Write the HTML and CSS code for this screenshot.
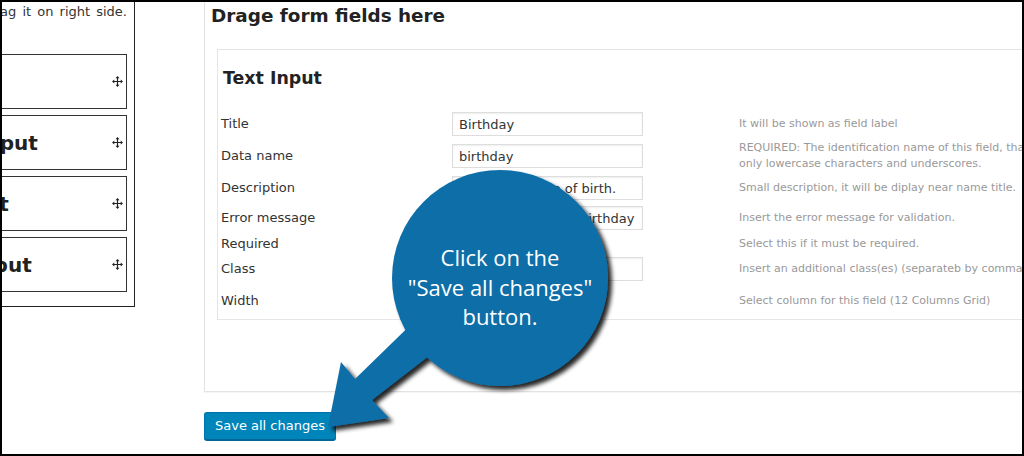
FILE: index.html
```html
<!DOCTYPE html>
<html lang="en">
<head>
<meta charset="utf-8">
<title>Form builder</title>
<link rel="stylesheet" href="styles.css">
</head>
<body>
<div class="frame">
  <aside class="palette">
    <p class="hint"><span>Select a field from the list and drag it on right side.</span></p>
    <ul class="field-list">
      <li class="field-item"><span class="field-name">Title</span><svg class="move" viewBox="0 0 11 11" width="11" height="11"><path d="M5.5 1v9M1 5.5h9" stroke="#222" stroke-width="1.2"/><path d="M5.5 0L3.5 2.3h4zM5.5 11L3.5 8.7h4zM0 5.5L2.3 3.5v4zM11 5.5L8.7 3.5v4z" fill="#222"/></svg></li>
      <li class="field-item"><span class="field-name">Text Input</span><svg class="move" viewBox="0 0 11 11" width="11" height="11"><path d="M5.5 1v9M1 5.5h9" stroke="#222" stroke-width="1.2"/><path d="M5.5 0L3.5 2.3h4zM5.5 11L3.5 8.7h4zM0 5.5L2.3 3.5v4zM11 5.5L8.7 3.5v4z" fill="#222"/></svg></li>
      <li class="field-item"><span class="field-name">Subject</span><svg class="move" viewBox="0 0 11 11" width="11" height="11"><path d="M5.5 1v9M1 5.5h9" stroke="#222" stroke-width="1.2"/><path d="M5.5 0L3.5 2.3h4zM5.5 11L3.5 8.7h4zM0 5.5L2.3 3.5v4zM11 5.5L8.7 3.5v4z" fill="#222"/></svg></li>
      <li class="field-item"><span class="field-name">File Input</span><svg class="move" viewBox="0 0 11 11" width="11" height="11"><path d="M5.5 1v9M1 5.5h9" stroke="#222" stroke-width="1.2"/><path d="M5.5 0L3.5 2.3h4zM5.5 11L3.5 8.7h4zM0 5.5L2.3 3.5v4zM11 5.5L8.7 3.5v4z" fill="#222"/></svg></li>
    </ul>
  </aside>

  <section class="builder">
    <div class="drop-area">
      <h2 class="drop-title">Drage form fields here</h2>
      <div class="field-card">
        <h3 class="card-title">Text Input</h3>
        <div class="form-grid">
          <div class="form-row">
            <label class="f-label">Title</label>
            <div class="f-control"><input class="f-input" type="text" value="Birthday"></div>
            <div class="f-desc">It will be shown as field label</div>
          </div>
          <div class="form-row">
            <label class="f-label">Data name</label>
            <div class="f-control"><input class="f-input" type="text" value="birthday"></div>
            <div class="f-desc">REQUIRED: The identification name of this field, that can contain<br>only lowercase characters and underscores.</div>
          </div>
          <div class="form-row">
            <label class="f-label">Description</label>
            <div class="f-control"><input class="f-input" type="text" value="Enter your date of birth."></div>
            <div class="f-desc">Small description, it will be diplay near name title.</div>
          </div>
          <div class="form-row">
            <label class="f-label">Error message</label>
            <div class="f-control"><input class="f-input" type="text" value="Please insert your birthday"></div>
            <div class="f-desc">Insert the error message for validation.</div>
          </div>
          <div class="form-row">
            <label class="f-label">Required</label>
            <div class="f-control"><input class="f-check" type="checkbox"></div>
            <div class="f-desc">Select this if it must be required.</div>
          </div>
          <div class="form-row">
            <label class="f-label">Class</label>
            <div class="f-control"><input class="f-input" type="text" value=""></div>
            <div class="f-desc">Insert an additional class(es) (separateb by commas)</div>
          </div>
          <div class="form-row">
            <label class="f-label">Width</label>
            <div class="f-control"><select class="f-select"><option>12</option></select></div>
            <div class="f-desc">Select column for this field (12 Columns Grid)</div>
          </div>
        </div>
      </div>
    </div>
    <button class="save-btn" type="button">Save all changes</button>
  </section>

  <div class="callout">
    <svg class="callout-shape" width="1024" height="456" viewBox="0 0 1024 456">
      <defs>
        <filter id="shadow" x="-10%" y="-10%" width="130%" height="130%">
          <feDropShadow dx="4" dy="4" stdDeviation="2" flood-color="#000" flood-opacity="0.85"/>
        </filter>
      </defs>
      <g filter="url(#shadow)" fill="#0a6ea8">
        <polygon points="328,427 341,362 355,379 430,306 452,338 372,400 389,418"/>
        <circle cx="500" cy="278" r="108"/>
      </g>
    </svg>
    <div class="callout-text">Click on the<br>"Save all changes"<br>button.</div>
  </div>
</div>
</body>
</html>
```

FILE: styles.css
```css
* { box-sizing: border-box; }

html, body {
  margin: 0;
  padding: 0;
  background: #fff;
}

body {
  font-family: "DejaVu Sans", Verdana, sans-serif;
  color: #333;
}

.frame {
  position: relative;
  width: 1024px;
  height: 456px;
  border: 2px solid #000;
  background: #fff;
  display: flex;
  align-items: flex-start;
  overflow: hidden;
}

/* left palette */
.palette {
  flex-shrink: 0;
  width: 133px;
  height: 305px;
  border-right: 1px solid #222;
  border-bottom: 1px solid #222;
  padding-right: 7px;
  overflow: hidden;
}

.hint {
  margin: 0;
  display: flex;
  justify-content: flex-end;
  white-space: nowrap;
  font-size: 13px;
  line-height: 20px;
  word-spacing: 2px;
  color: #333;
}

.field-list {
  list-style: none;
  margin: 32px 0 0;
  padding: 0;
  display: flex;
  flex-direction: column;
  align-items: flex-end;
  gap: 6px;
}

.field-item {
  flex-shrink: 0;
  width: 219px;
  height: 55px;
  border: 1px solid #333;
  display: flex;
  align-items: center;
  justify-content: space-between;
  padding: 0 3px 0 15px;
}

.field-name {
  font-size: 20px;
  font-weight: bold;
  color: #222;
  white-space: nowrap;
}

.move { display: block; flex-shrink: 0; }

/* builder */
.builder {
  flex-shrink: 0;
  width: 900px;
  margin-left: 69px;
}

.drop-area {
  height: 390px;
  border-left: 1px solid #e3e3e3;
  border-bottom: 1px solid #e3e3e3;
  box-shadow: 0 1px 1px rgba(0,0,0,0.04);
  padding: 2px 0 0 6px;
}

.drop-title {
  margin: 0;
  font-size: 18.4px;
  line-height: 24px;
  font-weight: bold;
  color: #222;
}

.field-card {
  margin: 21px 0 0 6px;
  height: 271px;
  border: 1px solid #e5e5e5;
  border-right: none;
  padding: 16px 0 0 3px;
}

.card-title {
  margin: 0 0 0 2px;
  font-size: 17.4px;
  line-height: 24px;
  font-weight: bold;
  color: #222;
}

.form-grid {
  margin-top: 18px;
  display: grid;
  grid-template-columns: 231px 287px auto;
  grid-template-rows: 32px 32px 32px 28px 24px 26px 37px;
  align-items: center;
}

.form-row { display: contents; }

.f-label {
  font-size: 13px;
  line-height: 16px;
  color: #333;
}

.f-control { display: flex; align-items: center; }

.f-input {
  width: 191px;
  height: 24px;
  margin: 0;
  padding: 0 6px;
  border: 1px solid #ddd;
  background: #fff;
  box-shadow: inset 0 1px 2px rgba(0,0,0,0.07);
  font-family: "DejaVu Sans", Verdana, sans-serif;
  font-size: 13px;
  color: #333;
}

.f-check {
  appearance: none;
  width: 16px;
  height: 16px;
  margin: 0;
  border: 1px solid #b4b9be;
  background: #fff;
}

.f-select {
  width: 80px;
  height: 24px;
  margin: 0;
  border: 1px solid #ddd;
  background: #fff;
  font-family: "DejaVu Sans", Verdana, sans-serif;
  font-size: 13px;
}

.f-desc {
  font-size: 11px;
  line-height: 16px;
  color: #999;
  white-space: nowrap;
}

.save-btn {
  display: block;
  margin-top: 20px;
  height: 28px;
  padding: 0 10px;
  border: 1px solid #0073aa;
  border-bottom-color: #006799;
  border-radius: 3px;
  background: #0085ba;
  box-shadow: 0 1px 0 #006799;
  color: #fff;
  font-family: "DejaVu Sans", Verdana, sans-serif;
  font-size: 13px;
  line-height: 26px;
  white-space: nowrap;
}

/* callout annotation */
.callout {
  position: absolute;
  top: -2px;
  left: -2px;
  width: 1024px;
  height: 456px;
  pointer-events: none;
}

.callout-shape {
  position: absolute;
  top: 0;
  left: 0;
}

.callout-text {
  position: absolute;
  left: 392px;
  top: 243px;
  width: 216px;
  text-align: center;
  font-family: "Open Sans", "Noto Sans", sans-serif;
  font-size: 22px;
  line-height: 29.5px;
  color: #fff;
}
```
